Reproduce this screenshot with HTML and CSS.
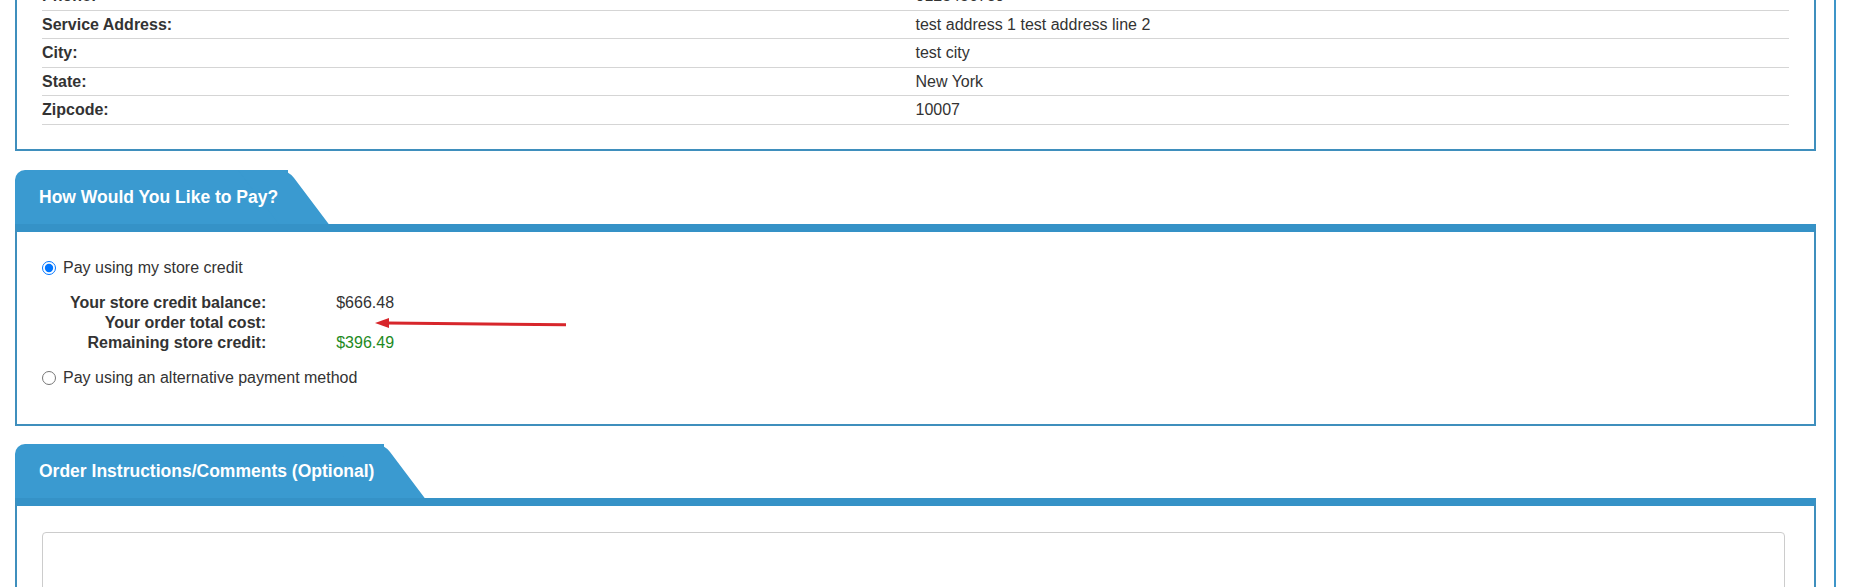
FILE: index.html
```html
<!DOCTYPE html>
<html lang="en">
<head>
    <meta charset="UTF-8">
    <title>Checkout</title>
    <link rel="stylesheet" href="styles.css">
</head>
<body>
    <div class="page">
        <!-- service details (scrolled, top part is off screen) -->
        <div class="section">
            <div class="panel-body plain">
                <table class="details">
                    <tr><td class="label">Phone:</td><td>0123456789</td></tr>
                    <tr><td class="label">Service Address:</td><td>test address 1 test address line 2</td></tr>
                    <tr><td class="label">City:</td><td>test city</td></tr>
                    <tr><td class="label">State:</td><td>New York</td></tr>
                    <tr><td class="label">Zipcode:</td><td>10007</td></tr>
                </table>
            </div>
        </div>

        <div class="section pay-section">
            <div class="tab">How Would You Like to Pay?</div>
            <div class="panel-body pay-body">
                <label class="radio">
                    <input type="radio" name="pay" checked>
                    <span>Pay using my store credit</span>
                </label>
                <table class="credit">
                    <tr><td class="credit-label">Your store credit balance:</td><td>$666.48</td></tr>
                    <tr><td class="credit-label">Your order total cost:</td><td></td></tr>
                    <tr><td class="credit-label">Remaining store credit:</td><td class="remaining">$396.49</td></tr>
                </table>
                <label class="radio">
                    <input type="radio" name="pay">
                    <span>Pay using an alternative payment method</span>
                </label>
                <svg class="arrow" width="192" height="12" viewBox="0 0 192 12">
                    <line x1="12" y1="6" x2="191" y2="7.8" stroke="#d7262b" stroke-width="3"/>
                    <polygon points="0,6 14,1 14,11" fill="#d7262b"/>
                </svg>
            </div>
        </div>

        <div class="section">
            <div class="tab">Order Instructions/Comments (Optional)</div>
            <div class="panel-body comments-body">
                <textarea class="comments"></textarea>
            </div>
        </div>
    </div>
</body>
</html>
```

FILE: styles.css
```css
:root {
    --tab-color: #3a9ad0;
    --bar-color: #3592c7;
    --border-color: #3f8fbd;
    --text-color: #333333;
    --line-color: #d5d5d5;
}
body {
    margin: 0;
    font-family: "Liberation Sans", Arial, sans-serif;
    font-size: 16px;
    color: var(--text-color);
    background: #ffffff;
}
.page {
    margin: -45px 25px 0 0;
    padding: 0 18px 0 15px;
    border-right: 2px solid #3d95c8;
    min-height: 700px;
}
.section {
    margin-bottom: 19px;
}
.pay-section {
    margin-bottom: 18px;
}
.tab {
    position: relative;
    z-index: 0;
    display: inline-block;
    height: 54px;
    line-height: 55px;
    padding: 0 10px 0 24px;
    background: var(--tab-color);
    color: #ffffff;
    font-weight: bold;
    font-size: 17.5px;
    border-top-left-radius: 10px;
    vertical-align: top;
}
.tab::after {
    content: '';
    position: absolute;
    z-index: -1;
    top: 0;
    left: calc(100% - 50px);
    width: 50px;
    height: 100%;
    background: var(--tab-color);
    transform: skewX(37deg);
    transform-origin: top left;
    border-top-right-radius: 8px;
}
.panel-body {
    position: relative;
    border: 2px solid var(--border-color);
    border-top: 8px solid var(--bar-color);
    padding: 25px 25px 24px;
}
.panel-body.plain {
    border-top: 2px solid var(--border-color);
}
.details {
    width: 100%;
    border-collapse: collapse;
}
.details td {
    width: 50%;
    padding: 4px 0;
    line-height: 19.5px;
    border-bottom: 1px solid var(--line-color);
}
.details .label {
    font-weight: bold;
}
.pay-body {
    padding-top: 26px;
    padding-bottom: 36px;
}
.radio {
    display: flex;
    align-items: center;
    gap: 7px;
    height: 20px;
    line-height: 20px;
}
.radio input {
    margin: 0;
    width: 14px;
    height: 14px;
}
.credit {
    margin: 15.5px 0 15px 28px;
    border-collapse: collapse;
}
.credit td {
    padding: 0;
    line-height: 20px;
}
.credit-label {
    width: 194px;
    padding-right: 70px !important;
    text-align: right;
    font-weight: bold;
    white-space: nowrap;
}
.remaining {
    color: #1e8a1e;
}
.arrow {
    position: absolute;
    left: 358px;
    top: 85px;
}
.comments-body {
    padding-top: 26px;
}
.comments {
    display: block;
    width: calc(100% - 4px);
    height: 140px;
    box-sizing: border-box;
    border: 1px solid #cccccc;
    border-radius: 4px;
    resize: vertical;
    font-family: inherit;
}
```
